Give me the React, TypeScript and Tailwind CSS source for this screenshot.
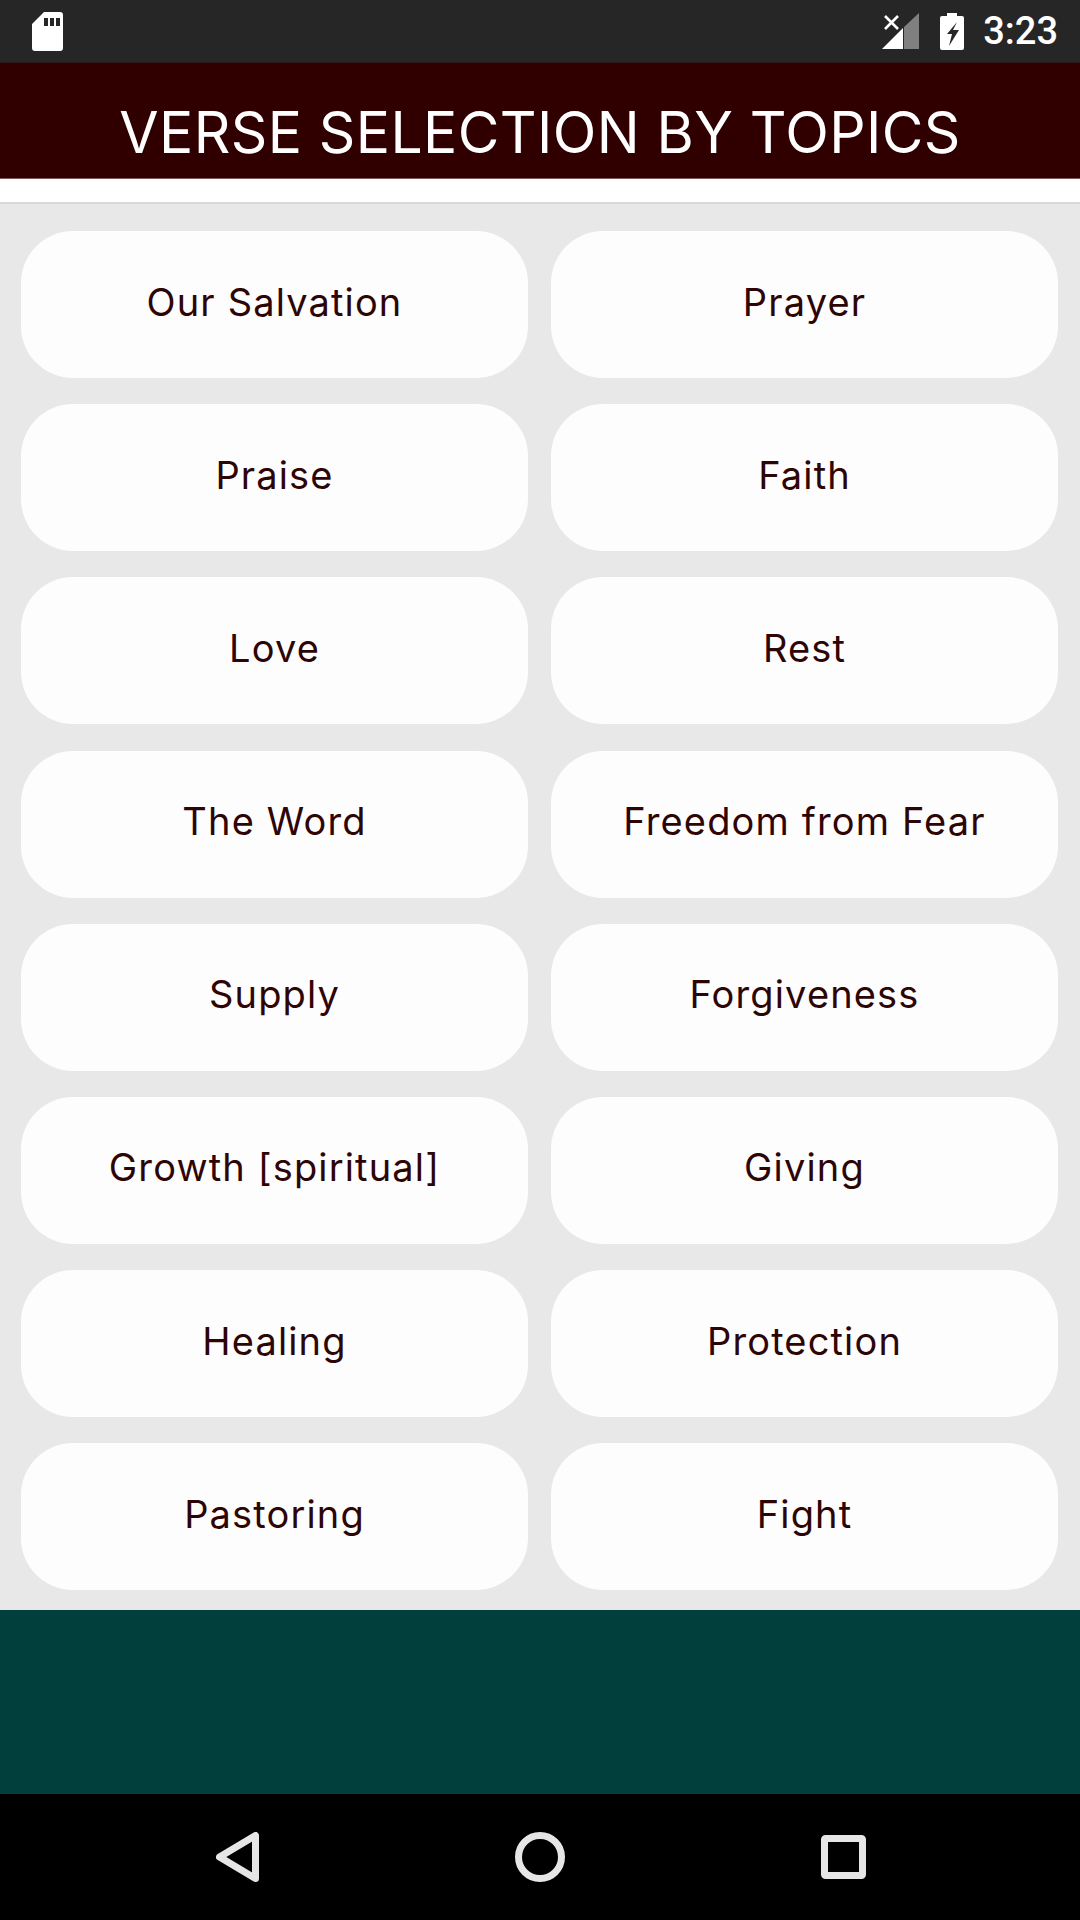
const topics = [
  'Our Salvation', 'Prayer',
  'Praise', 'Faith',
  'Love', 'Rest',
  'The Word', 'Freedom from Fear',
  'Supply', 'Forgiveness',
  'Growth [spiritual]', 'Giving',
  'Healing', 'Protection',
  'Pastoring', 'Fight',
];

const StatusBar = () => (
  <div className="h-[63px] bg-[#262626] flex items-center pl-[32px] pr-[22px] border-b border-[#2c1a1a]">
    <svg width="31" height="39" viewBox="0 0 31 39">
      <path fillRule="evenodd" fill="#fff" d="M12 0h16a3 3 0 0 1 3 3v33a3 3 0 0 1-3 3H3a3 3 0 0 1-3-3V12zM12 6v8h4V6zM18 6v8h4V6zM24 6v8h4V6z" />
    </svg>
    <div className="flex-1" />
    <svg width="37" height="37" viewBox="0 0 37 37" className="mr-[21px]">
      <path fill="#fff" d="M0 36 21 15v21z" />
      <path fill="#808080" d="M22 14 37 0v36H22z" />
      <path stroke="#fff" strokeWidth="2.6" d="M3 3l13 13M16 3 3 16" />
    </svg>
    <svg width="24" height="37" viewBox="0 0 24 37" className="mr-[19px]">
      <path fill="#fff" fillRule="evenodd" d="M7 0h10v3h5a2 2 0 0 1 2 2v30a2 2 0 0 1-2 2H2a2 2 0 0 1-2-2V5a2 2 0 0 1 2-2h5zM17 9 7 21h5l-3 12 10-16h-6z" />
    </svg>
    <span className="text-[38px] leading-none text-white font-medium font-['Roboto',sans-serif] mt-[-1px]">3:23</span>
  </div>
);

const NavBar = () => (
  <div className="h-[126px] bg-black flex items-center justify-center gap-x-[256px] text-[#e6e6e6] pb-[1px] pl-[1px]">
    <svg width="43" height="50" viewBox="0 0 43 50" fill="none" stroke="currentColor" strokeWidth="7" strokeLinejoin="round">
      <path d="M39.500 3.500v43L3.500 25z" />
    </svg>
    <svg width="50" height="50" viewBox="0 0 50 50" fill="none" stroke="currentColor" strokeWidth="7">
      <circle cx="25" cy="25" r="21.500" />
    </svg>
    <svg width="45" height="44" viewBox="0 0 45 44" fill="none" stroke="currentColor" strokeWidth="7" strokeLinejoin="round">
      <rect x="3.500" y="3.500" width="38" height="37" rx="1" />
    </svg>
  </div>
);

export default function App() {
  return (
    <div className="w-[1080px] h-[1920px] flex flex-col overflow-hidden font-['Inter',sans-serif]">
      <StatusBar />
      <header className="h-[116px] bg-[#300000] flex items-center justify-center border-b border-[#7d5c5c]">
        <h1 className="text-[57px] leading-none text-white tracking-[0.4px] mt-[23px]">VERSE SELECTION BY TOPICS</h1>
      </header>
      <div className="h-[25px] bg-white border-b-2 border-[#d9d9d9]" />
      <main className="flex-1 bg-[#e8e8e8] pt-[27px] pl-[21px] pr-[22px]">
        <div className="grid grid-cols-2 gap-x-[23px] gap-y-[26.2px]">
          {topics.map((topic) => (
            <button
              key={topic}
              className="h-[147px] rounded-[52px] bg-[#fdfdfd] text-[38px] leading-none tracking-[1.15px] text-[#2e0505] flex items-center justify-center pb-[6px]"
            >
              {topic}
            </button>
          ))}
        </div>
      </main>
      <div className="h-[184px] bg-[#003f3c]" />
      <NavBar />
    </div>
  );
}
